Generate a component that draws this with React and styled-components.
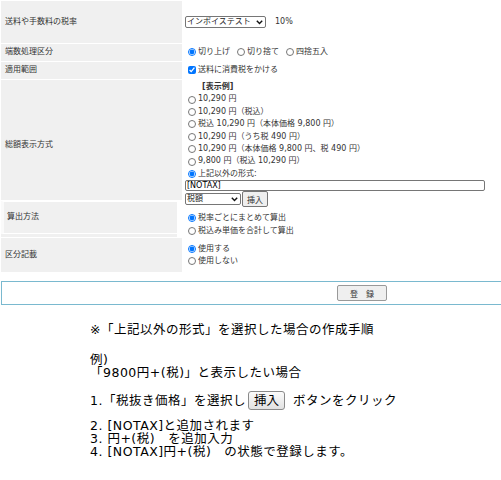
import React from "react";
import styled, { createGlobalStyle } from "styled-components";

const FONT = `"DejaVu Sans", "Noto Sans CJK JP", sans-serif`;

const Global = createGlobalStyle`
  html, body { margin: 0; padding: 0; background: #fff; }
  body {
    font-family: ${FONT};
    color: #333;
  }
`;

const Page = styled.div`
  width: 501px;
  overflow: hidden;
  padding: 1px 0 0 1px;
  box-sizing: border-box;
`;

const Form = styled.div`
  display: grid;
  grid-template-columns: 181px 318px;
  grid-template-rows: 42px 17px 17px 120px 36px 34px;
  gap: 1px;
  font-size: 8px;
  line-height: 12.4px;
`;

const Label = styled.div`
  background: #f0f0f0;
  display: flex;
  align-items: center;
  padding: ${(p) => p.$pt || 0}px 0 0 4px;
  white-space: nowrap;
  color: #333;
`;

const NestedLabelCell = styled.div`
  display: flex;
  flex-direction: column;
  padding: 0 5px 3px 0;
  background: linear-gradient(#fff, #fff) right top / 5px 100% no-repeat, #f0f0f0;
`;

const NestedLabel = styled.div`
  flex: 1;
  display: flex;
  align-items: center;
  padding-left: 3px;
  border-top: 1px solid #fff;
  border-bottom: 1px solid #fff;
  border-left: 3px solid #fafafa;
  background: #f0f0f0;
  white-space: nowrap;
`;

const Value = styled.div`
  display: flex;
  flex-direction: ${(p) => (p.$column ? "column" : "row")};
  align-items: ${(p) => (p.$column ? "flex-start" : "center")};
  justify-content: ${(p) => (p.$column ? "center" : "flex-start")};
  padding-left: 2px;
  gap: ${(p) => p.$gap || 0}px;
  white-space: nowrap;
`;

const DisplayCell = styled.div`
  grid-row: 4 / span 2;
  grid-column: 2;
  display: flex;
  flex-direction: column;
  align-items: flex-start;
  padding: 1px 0 0 2px;
  white-space: nowrap;
`;

const SelectWrap = styled.span`
  position: relative;
  display: inline-flex;
`;

const SelectBox = styled.select`
  appearance: none;
  -webkit-appearance: none;
  font-family: ${FONT};
  font-size: 8px;
  line-height: 10px;
  height: 12px;
  width: ${(p) => p.$w}px;
  padding: 0 0 0 1px;
  margin: 0;
  border: 1px solid #767676;
  border-radius: 2px;
  background: #fff;
  color: #222;
  box-sizing: border-box;
`;

const Chevron = styled.svg`
  position: absolute;
  right: 3px;
  top: 4px;
  pointer-events: none;
`;

function Select({ w, children, value }) {
  return (
    <SelectWrap>
      <SelectBox $w={w} defaultValue={value}>
        {children}
      </SelectBox>
      <Chevron width="7" height="5" viewBox="0 0 7 5">
        <path d="M0.8 0.8 L3.5 3.6 L6.2 0.8" fill="none" stroke="#111" strokeWidth="1.4" />
      </Chevron>
    </SelectWrap>
  );
}

const Rate = styled.span`
  margin-left: 9px;
`;

const Opt = styled.label`
  display: flex;
  align-items: center;
  height: 12.4px;
  color: #333;
`;

const Radio = styled.input.attrs({ type: "radio" })`
  width: 8px;
  height: 8px;
  margin: 0 2px 0 3px;
`;

const Check = styled.input.attrs({ type: "checkbox" })`
  width: 8px;
  height: 8px;
  margin: 0 2px 0 3px;
`;

const Heading = styled.div`
  height: 12.4px;
  padding-left: 17px;
  font-weight: bold;
`;

const TextInput = styled.input`
  width: 300px;
  height: 13px;
  box-sizing: border-box;
  margin: 0;
  padding: 0 1px;
  border: 1px solid #767676;
  border-radius: 2px;
  font-family: ${FONT};
  font-size: 8px;
  color: #000;
`;

const InsertRow = styled.div`
  display: flex;
  align-items: center;
  height: 16px;
  gap: 1px;
  margin-bottom: 5px;
`;

const SmallButton = styled.button`
  width: ${(p) => p.$w}px;
  height: 16px;
  padding: 0;
  font-family: ${FONT};
  font-size: 8px;
  color: #333;
  background: #efefef;
  border: 1px solid ${(p) => p.$border || "#767676"};
  border-radius: 2px;
`;

const SubmitBar = styled.div`
  margin-top: 9px;
  width: 722px;
  height: 24px;
  box-sizing: border-box;
  border: 1px solid #7ab9cf;
  display: flex;
  align-items: center;
  justify-content: center;
`;

const Guide = styled.div`
  margin-top: 18px;
  padding-left: 89px;
  font-size: 12.5px;
  letter-spacing: 0.5px;
  line-height: 13px;
  color: #000;
  white-space: nowrap;
`;

const Para = styled.p`
  margin: ${(p) => p.$mt || 0}px 0 0 0;
  line-height: ${(p) => p.$lh || 13}px;
`;

const GuideButton = styled.span`
  display: inline-flex;
  align-items: center;
  justify-content: center;
  vertical-align: middle;
  width: 37px;
  height: 19px;
  box-sizing: border-box;
  margin: 0 8px 0 2px;
  border: 1px solid #8a8a8a;
  border-radius: 3px;
  background: linear-gradient(#fbfbfb, #e2e2e2);
  font-size: 12.5px;
  letter-spacing: 0;
  position: relative;
  top: -1px;
`;

const displayOptions = [
  "10,290 円",
  "10,290 円（税込）",
  "税込 10,290 円（本体価格 9,800 円）",
  "10,290 円（うち税 490 円）",
  "10,290 円（本体価格 9,800 円、税 490 円）",
  "9,800 円（税込 10,290 円）",
];

export default function App() {
  return (
    <Page>
      <Global />
      <Form>
        <Label>送料や手数料の税率</Label>
        <Value>
          <Select w={81} value="a">
            <option value="a">インボイステスト</option>
          </Select>
          <Rate>10%</Rate>
        </Value>

        <Label>端数処理区分</Label>
        <Value $gap={4}>
          <Opt><Radio name="round" defaultChecked />切り上げ</Opt>
          <Opt><Radio name="round" />切り捨て</Opt>
          <Opt><Radio name="round" />四捨五入</Opt>
        </Value>

        <Label>適用範囲</Label>
        <Value>
          <Opt><Check defaultChecked />送料に消費税をかける</Opt>
        </Value>

        <Label $pt={10}>総額表示方式</Label>
        <DisplayCell>
          <Heading>[表示例]</Heading>
          {displayOptions.map((t) => (
            <Opt key={t}><Radio name="disp" />{t}</Opt>
          ))}
          <Opt><Radio name="disp" defaultChecked />上記以外の形式:</Opt>
          <TextInput defaultValue="[NOTAX]" />
          <InsertRow>
            <Select w={56} value="t">
              <option value="t">税額</option>
            </Select>
            <SmallButton $w={26}>挿入</SmallButton>
          </InsertRow>
          <Opt><Radio name="calc" defaultChecked />税率ごとにまとめて算出</Opt>
          <Opt><Radio name="calc" />税込み単価を合計して算出</Opt>
        </DisplayCell>

        <NestedLabelCell>
          <NestedLabel>算出方法</NestedLabel>
        </NestedLabelCell>

        <Label>区分記載</Label>
        <Value $column>
          <Opt><Radio name="kubun" defaultChecked />使用する</Opt>
          <Opt><Radio name="kubun" />使用しない</Opt>
        </Value>
      </Form>

      <SubmitBar>
        <SmallButton $w={50} $border="#999">登　録</SmallButton>
      </SubmitBar>

      <Guide>
        <Para>※「上記以外の形式」を選択した場合の作成手順</Para>
        <Para $mt={17}>
          例)
          <br />
          「9800円+(税)」と表示したい場合
        </Para>
        <Para $mt={12} $lh={20}>
          1.「税抜き価格」を選択し<GuideButton>挿入</GuideButton>ボタンをクリック
        </Para>
        <Para $mt={8}>
          2. [NOTAX]と追加されます
          <br />
          3. 円+(税)　を追加入力
          <br />
          4. [NOTAX]円+(税)　の状態で登録します。
        </Para>
      </Guide>
    </Page>
  );
}
